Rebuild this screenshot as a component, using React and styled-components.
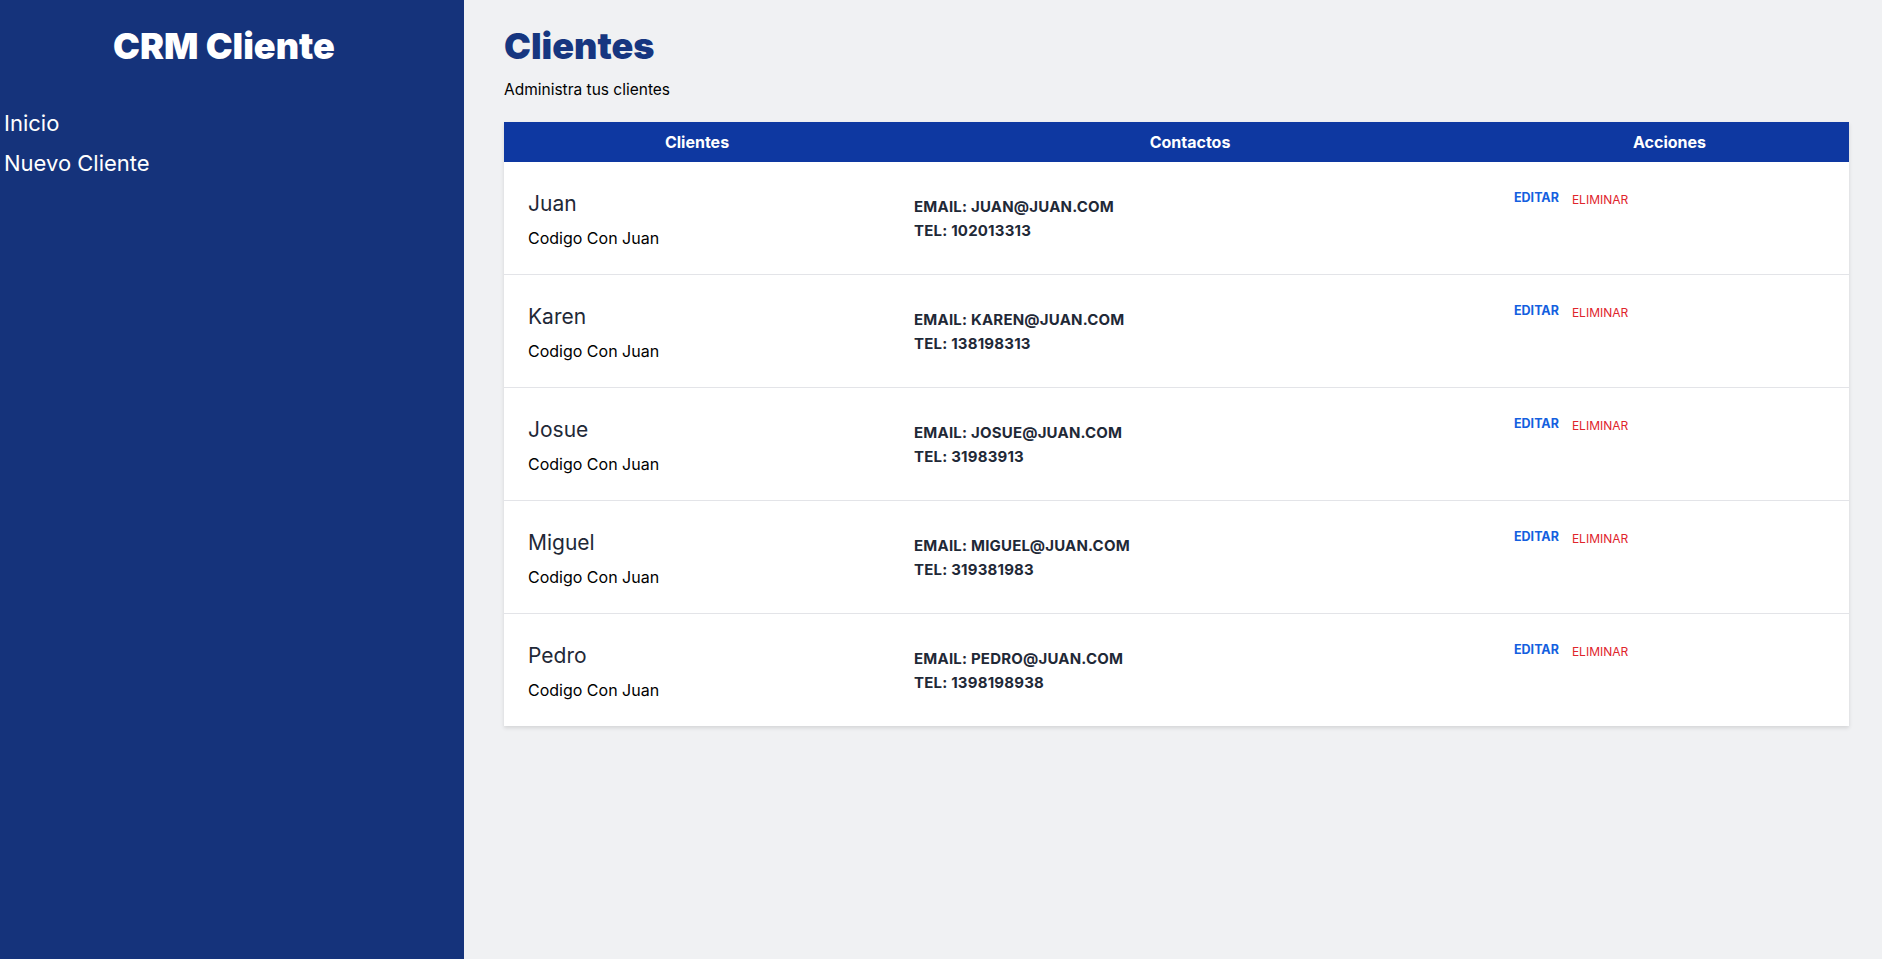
import React from "react";
import styled, { createGlobalStyle } from "styled-components";

const GlobalStyle = createGlobalStyle`
  * {
    box-sizing: border-box;
  }

  body {
    margin: 0;
    font-family: Inter, "Noto Sans", sans-serif;
    background: #f0f1f3;
    color: #000;
  }
`;

const clientes = [
  { nombre: "Juan", empresa: "Codigo Con Juan", email: "juan@juan.com", telefono: "102013313" },
  { nombre: "Karen", empresa: "Codigo Con Juan", email: "karen@juan.com", telefono: "138198313" },
  { nombre: "Josue", empresa: "Codigo Con Juan", email: "josue@juan.com", telefono: "31983913" },
  { nombre: "Miguel", empresa: "Codigo Con Juan", email: "miguel@juan.com", telefono: "319381983" },
  { nombre: "Pedro", empresa: "Codigo Con Juan", email: "pedro@juan.com", telefono: "1398198938" },
];

const App = () => {
  return (
    <>
      <GlobalStyle />
      <Layout>
        <Sidebar>
          <Brand>CRM Cliente</Brand>
          <Nav>
            <NavLink href="#">Inicio</NavLink>
            <NavLink href="#">Nuevo Cliente</NavLink>
          </Nav>
        </Sidebar>

        <Main>
          <Title>Clientes</Title>
          <Subtitle>Administra tus clientes</Subtitle>

          <Table>
            <HeadRow>
              <HeadCell>Clientes</HeadCell>
              <HeadCell>Contactos</HeadCell>
              <HeadCell>Acciones</HeadCell>
            </HeadRow>

            {clientes.map((cliente, i) => (
              <Row key={cliente.nombre} $last={i === clientes.length - 1}>
                <NameCell>
                  <Name>{cliente.nombre}</Name>
                  <Company>{cliente.empresa}</Company>
                </NameCell>
                <ContactCell>
                  <ContactLine>Email: {cliente.email}</ContactLine>
                  <ContactLine>Tel: {cliente.telefono}</ContactLine>
                </ContactCell>
                <ActionCell>
                  <ActionButton type="button" $variant="edit">
                    Editar
                  </ActionButton>
                  <ActionButton type="button" $variant="delete">
                    Eliminar
                  </ActionButton>
                </ActionCell>
              </Row>
            ))}
          </Table>
        </Main>
      </Layout>
    </>
  );
};

const Layout = styled.div`
  display: flex;
  min-height: 100vh;
`;

const Sidebar = styled.aside`
  width: 464px;
  flex-shrink: 0;
  background: #15337b;
  padding-top: 26px;
`;

const Brand = styled.h2`
  margin: 0;
  padding-right: 16px;
  font-size: 36px;
  line-height: 40px;
  font-weight: 900;
  color: #fff;
  text-align: center;
`;

const Nav = styled.nav`
  margin-top: 41px;
  padding-left: 4px;
`;

const NavLink = styled.a`
  display: block;
  margin-top: 8px;
  font-size: 22px;
  line-height: 32px;
  color: #fff;
  text-decoration: none;

  &:hover {
    color: #93c5fd;
  }
`;

const Main = styled.main`
  flex: 1;
  padding: 26px 33px 0 40px;
`;

const Title = styled.h1`
  margin: 0;
  font-size: 36px;
  line-height: 40px;
  font-weight: 900;
  color: #163680;
`;

const Subtitle = styled.p`
  margin: 12px 0 0;
  font-size: 15.5px;
  line-height: 24px;
`;

const Table = styled.div`
  margin-top: 20px;
  background: #fff;
  box-shadow: 0 2px 4px rgba(0, 0, 0, 0.12);
`;

const Grid = styled.div`
  display: grid;
  grid-template-columns: 386px 600px 1fr;
`;

const HeadRow = styled(Grid)`
  height: 40px;
  background: #0e38a1;
  align-items: center;
`;

const HeadCell = styled.div`
  text-align: center;
  color: #fff;
  font-size: 16px;
  font-weight: 700;
`;

const Row = styled(Grid)`
  align-items: start;
  border-bottom: ${(p) => (p.$last ? "none" : "1px solid #e3e4e8")};
`;

const NameCell = styled.div`
  padding: 26px 24px 24px;
`;

const Name = styled.p`
  margin: 0;
  font-size: 21px;
  line-height: 32px;
  color: #1f2937;
`;

const Company = styled.p`
  margin: 6px 0 0;
  font-size: 16px;
  line-height: 24px;
  color: #000;
`;

const ContactCell = styled.div`
  padding: 33px 24px 0;
`;

const ContactLine = styled.p`
  margin: 0;
  font-size: 15px;
  line-height: 24px;
  font-weight: 700;
  letter-spacing: 0.2px;
  color: #1f2937;
  text-transform: uppercase;
`;

const ActionCell = styled.div`
  display: flex;
  align-items: flex-start;
  gap: 13px;
  padding: 28px 24px 0;
`;

const ActionButton = styled.button`
  border: none;
  background: none;
  padding: 0;
  cursor: pointer;
  font-family: inherit;
  text-transform: uppercase;
  font-size: ${(p) => (p.$variant === "edit" ? "12.5px" : "12px")};
  line-height: ${(p) => (p.$variant === "edit" ? "16px" : "20px")};
  font-weight: ${(p) => (p.$variant === "edit" ? 700 : 400)};
  color: ${(p) => (p.$variant === "edit" ? "#145fe0" : "#e0242c")};
`;

export default App;
